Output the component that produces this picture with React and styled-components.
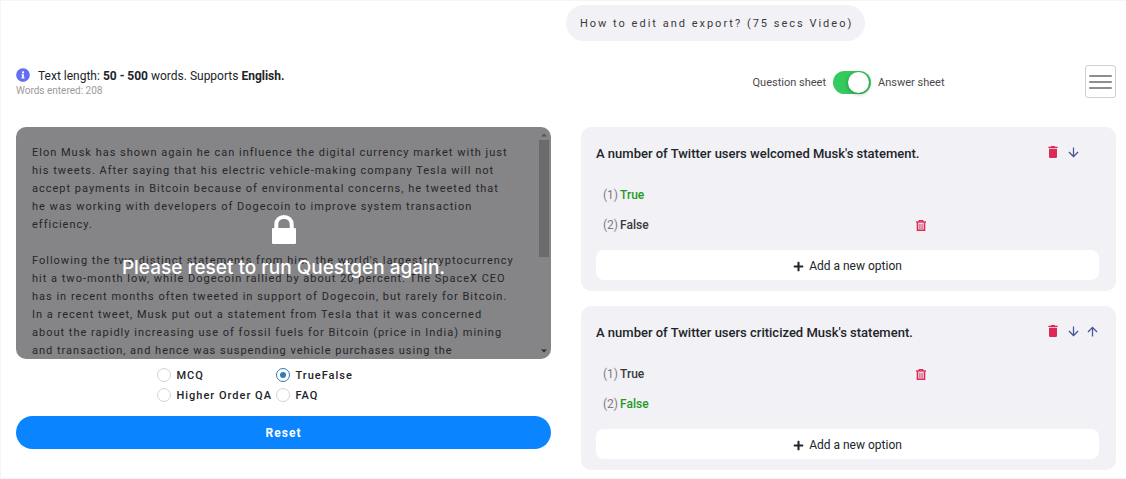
import React, { useState } from "react";
import styled, { createGlobalStyle } from "styled-components";
import { FaInfoCircle, FaPlus } from "react-icons/fa";
import { MdArrowDownward, MdArrowUpward, MdDelete } from "react-icons/md";

const article = `Elon Musk has shown again he can influence the digital currency market with just his tweets. After saying that his electric vehicle-making company Tesla will not accept payments in Bitcoin because of environmental concerns, he tweeted that he was working with developers of Dogecoin to improve system transaction efficiency.

Following the two distinct statements from him, the world's largest cryptocurrency hit a two-month low, while Dogecoin rallied by about 20 percent. The SpaceX CEO has in recent months often tweeted in support of Dogecoin, but rarely for Bitcoin. In a recent tweet, Musk put out a statement from Tesla that it was concerned about the rapidly increasing use of fossil fuels for Bitcoin (price in India) mining and transaction, and hence was suspending vehicle purchases using the`;

const list_type = ["MCQ", "TrueFalse", "Higher Order QA", "FAQ"];

const list_question = [
  {
    title: "A number of Twitter users welcomed Musk's statement.",
    options: ["True", "False"],
    answer: "True",
    canMoveUp: false,
  },
  {
    title: "A number of Twitter users criticized Musk's statement.",
    options: ["True", "False"],
    answer: "False",
    canMoveUp: true,
  },
];

const GlobalStyle = createGlobalStyle`
  * {
    box-sizing: border-box;
  }
  body {
    margin: 0;
    background: #fff;
    color: #212529;
    font-family: Roboto, "Liberation Sans", sans-serif;
    font-size: 12px;
  }
  button, input, textarea {
    font-family: inherit;
    margin: 0;
  }
  button {
    border: 0;
    padding: 0;
    background: none;
    cursor: pointer;
  }
`;

const Page = styled.main`
  padding: 4px 10px 8px 15px;
  border: 1px solid #f5f5f5;
  border-right: 0;
`;

const VideoButton = styled.button`
  display: block;
  margin-left: 50%;
  height: 36px;
  padding: 0 12px 0 14px;
  border-radius: 18px;
  background: #f2f1f6;
  color: #3a3a3c;
  font-size: 11px;
  letter-spacing: 2px;
`;

const Columns = styled.div`
  display: grid;
  grid-template-columns: 1fr 1fr;
  column-gap: 30px;
`;

const StatusBar = styled(Columns)`
  height: 62px;
  margin-top: 24px;
`;

const LengthInfo = styled.div`
  padding-top: 3px;
  line-height: 16px;
  p {
    display: flex;
    align-items: flex-start;
    margin: 0;
  }
  svg {
    margin-right: 8px;
    color: #636ef5;
  }
  span {
    white-space: pre;
  }
  small {
    display: block;
    color: #9b9b9b;
    font-size: 10px;
    line-height: 14px;
  }
`;

const SheetBar = styled.div`
  display: grid;
  grid-template-columns: 1fr auto 1fr;
  align-items: start;
`;

const SheetSwitch = styled.label`
  grid-column: 2;
  display: flex;
  align-items: center;
  gap: 7px;
  padding-top: 6px;
  color: #4a4a4a;
  font-size: 11px;
`;

const Toggle = styled.input`
  appearance: none;
  display: flex;
  width: 38px;
  height: 23px;
  padding: 1px 2px;
  border-radius: 12px;
  background: #34ca5e;
  justify-content: ${(props) => (props.checked ? "flex-end" : "flex-start")};
  cursor: pointer;
  &::before {
    content: "";
    width: 21px;
    height: 21px;
    border-radius: 50%;
    background: #fff;
    box-shadow: 0 1px 4px rgba(0, 0, 0, 0.35);
  }
`;

const MenuButton = styled.button`
  justify-self: end;
  display: flex;
  flex-direction: column;
  justify-content: center;
  gap: 4px;
  width: 31px;
  height: 33px;
  padding: 0 3px;
  border: 1px solid #cfcfcf;
  border-radius: 3px;
  span {
    height: 2px;
    border-radius: 1px;
    background: #8e8d92;
  }
`;

const Editor = styled.div`
  display: grid;
  height: 232px;
  border-radius: 10px;
  overflow: hidden;
  > * {
    grid-area: 1 / 1;
  }
`;

const ArticleText = styled.textarea`
  width: 100%;
  height: 100%;
  padding: 17px 36px 0 16px;
  border: 0;
  outline: 0;
  resize: none;
  overflow: hidden;
  background: #f2f1f6;
  color: #48484a;
  font-size: 11px;
  line-height: 18px;
  letter-spacing: 1px;
`;

const Scrollbar = styled.div`
  justify-self: end;
  display: flex;
  flex-direction: column;
  align-items: center;
  width: 10px;
  margin: 5px 2px;
  svg:last-child {
    margin-top: auto;
  }
`;

const Thumb = styled.div`
  width: 10px;
  height: 117px;
  margin-top: 2px;
  background: #c3c3c5;
`;

const Lock = styled.div`
  display: flex;
  flex-direction: column;
  align-items: center;
  justify-content: center;
  gap: 12px;
  z-index: 1;
  padding-top: 8px;
  background: rgba(0, 0, 0, 0.45);
  color: #fff;
  font-family: Inter, sans-serif;
  font-size: 19px;
  font-weight: 500;
  line-height: 24px;
`;

const TypeList = styled.fieldset`
  display: grid;
  grid-template-columns: 115px 1fr;
  gap: 4px;
  width: 254px;
  margin: 8px auto 13px;
  padding: 0;
  border: 0;
`;

const TypeLabel = styled.label`
  display: flex;
  align-items: center;
  gap: 6px;
  height: 16px;
  font-size: 11px;
  font-weight: 500;
  letter-spacing: 1px;
  white-space: nowrap;
`;

const Radio = styled.input`
  appearance: none;
  flex: none;
  display: grid;
  place-items: center;
  width: 14px;
  height: 14px;
  border: 1px solid ${(props) => (props.checked ? "#337ab7" : "#d4d4d4")};
  border-radius: 50%;
  &:checked::before {
    content: "";
    width: 6px;
    height: 6px;
    border-radius: 50%;
    background: #337ab7;
  }
`;

const ResetButton = styled.button`
  width: 100%;
  height: 33px;
  border-radius: 17px;
  background: #0a84ff;
  color: #fff;
  font-size: 12px;
  font-weight: 700;
  letter-spacing: 1px;
`;

const Cards = styled.div`
  display: grid;
  align-content: start;
  gap: 15px;
`;

const Card = styled.section`
  padding: 14px 17px 11px 15px;
  border-radius: 10px;
  background: #f2f1f6;
`;

const CardHead = styled.div`
  display: flex;
  justify-content: space-between;
  margin-bottom: 15px;
  h2 {
    margin: 0;
    padding-top: 2px;
    font-size: 13px;
    font-weight: 500;
    line-height: 22px;
  }
`;

const Tools = styled.div`
  display: grid;
  grid-template-columns: 16px 16px 14px;
  gap: 4px;
  height: 22px;
  align-items: center;
  justify-items: center;
`;

const IconButton = styled.button`
  display: flex;
  color: ${(props) => props.$color || "#46549c"};
`;

const Option = styled.div`
  display: grid;
  grid-template-columns: 313px auto;
  justify-content: start;
  align-items: center;
  height: 30px;
  padding-left: 7px;
  color: #3a3a3c;
  div {
    display: flex;
    gap: 2px;
  }
  span {
    color: #7d7d80;
  }
  b {
    font-weight: 500;
    color: ${(props) => (props.$correct ? "#1f9a1f" : "inherit")};
  }
`;

const AddButton = styled.button`
  display: flex;
  align-items: center;
  justify-content: center;
  gap: 5px;
  width: 100%;
  height: 30px;
  margin-top: 10px;
  padding-top: 2px;
  border-radius: 8px;
  background: #fff;
  color: #212529;
  font-size: 12px;
`;

const LockIcon = () => (
  <svg width="24" height="29" viewBox="0 0 24 29" fill="none">
    <path
      d="M4.3 14V9.5C4.3 5 7.6 2 12 2s7.7 3 7.7 7.5V14"
      stroke="#fff"
      strokeWidth="4"
    />
    <rect y="13" width="24" height="16" rx="1.2" fill="#fff" />
  </svg>
);

const BinIcon = () => (
  <svg width="10" height="11" viewBox="0 0 10 11" fill="none" stroke="currentColor">
    <path d="M0 2h10" strokeWidth="1.4" />
    <path d="M3.2 2V.6h3.6V2" strokeWidth="1.2" />
    <path d="M1.5 2.5v7.7h7V2.5" strokeWidth="1.6" />
    <path d="M3.7 3.8v5.4M5 3.8v5.4M6.3 3.8v5.4" strokeWidth=".7" />
  </svg>
);

const Arrow = ({ up }) => (
  <svg width="6" height="6" viewBox="0 0 6 6">
    {up ? (
      <path d="M3 1.5 6 4.5H0z" fill="#9a9a9c" />
    ) : (
      <path d="M3 4.5 6 1.5H0z" fill="#505052" />
    )}
  </svg>
);

const QuestionCard = ({ question }) => (
  <Card>
    <CardHead>
      <h2>{question.title}</h2>
      <Tools>
        <IconButton $color="#dc2a57" aria-label="Delete question">
          <MdDelete size={16} />
        </IconButton>
        <IconButton aria-label="Move down">
          <MdArrowDownward size={15} />
        </IconButton>
        {question.canMoveUp && (
          <IconButton aria-label="Move up">
            <MdArrowUpward size={15} />
          </IconButton>
        )}
      </Tools>
    </CardHead>
    {question.options.map((item, index) => (
      <Option key={item} $correct={item === question.answer}>
        <div>
          <span>({index + 1})</span>
          <b>{item}</b>
        </div>
        {item !== question.answer && (
          <IconButton $color="#dc2a57" aria-label="Delete option">
            <BinIcon />
          </IconButton>
        )}
      </Option>
    ))}
    <AddButton>
      <FaPlus size={11} />
      Add a new option
    </AddButton>
  </Card>
);

const App = () => {
  const [type, setType] = useState("TrueFalse");
  const [showAnswer, setShowAnswer] = useState(true);

  return (
    <>
      <GlobalStyle />
      <Page>
        <VideoButton>How to edit and export? (75 secs Video)</VideoButton>

        <StatusBar>
          <LengthInfo>
            <p>
              <FaInfoCircle size={14} />
              <span>
                Text length: <b>50 - 500</b> words. Supports <b>English.</b>
              </span>
            </p>
            <small>Words entered: 208</small>
          </LengthInfo>
          <SheetBar>
            <SheetSwitch>
              Question sheet
              <Toggle
                type="checkbox"
                role="switch"
                checked={showAnswer}
                onChange={() => setShowAnswer(!showAnswer)}
              />
              Answer sheet
            </SheetSwitch>
            <MenuButton aria-label="Menu">
              <span />
              <span />
              <span />
            </MenuButton>
          </SheetBar>
        </StatusBar>

        <Columns>
          <div>
            <Editor>
              <ArticleText aria-label="Text" defaultValue={article} readOnly />
              <Scrollbar>
                <Arrow up />
                <Thumb />
                <Arrow />
              </Scrollbar>
              <Lock>
                <LockIcon />
                Please reset to run Questgen again.
              </Lock>
            </Editor>
            <TypeList>
              {list_type.map((item) => (
                <TypeLabel key={item}>
                  <Radio
                    type="radio"
                    name="type"
                    checked={type === item}
                    onChange={() => setType(item)}
                  />
                  {item}
                </TypeLabel>
              ))}
            </TypeList>
            <ResetButton>Reset</ResetButton>
          </div>
          <Cards>
            {list_question.map((item) => (
              <QuestionCard key={item.title} question={item} />
            ))}
          </Cards>
        </Columns>
      </Page>
    </>
  );
};

export default App;
